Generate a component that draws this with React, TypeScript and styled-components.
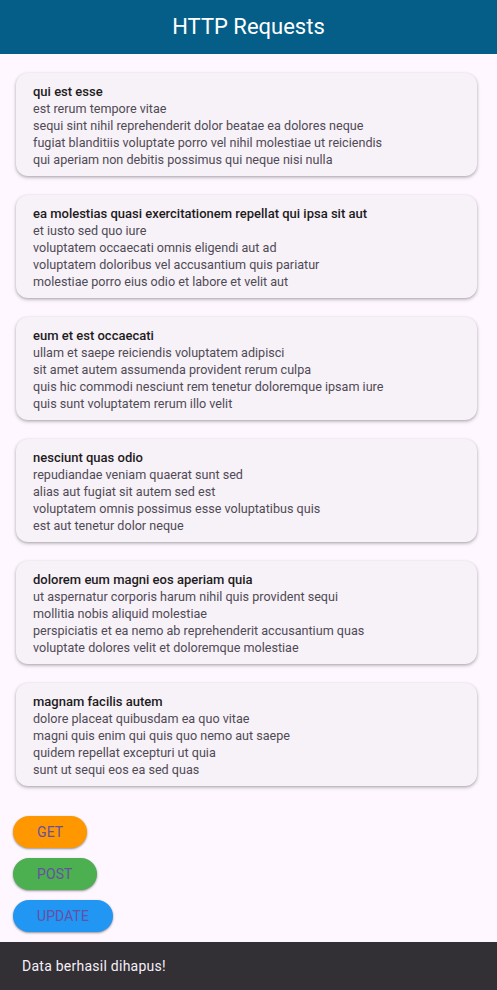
import React from "react";
import styled, { createGlobalStyle } from "styled-components";

const GlobalStyle = createGlobalStyle`
  html, body { margin: 0; padding: 0; }
  body {
    background: #fef7ff;
    font-family: Roboto, "Noto Sans", sans-serif;
    -webkit-font-smoothing: antialiased;
  }
`;

const Page = styled.div`
  min-height: 990px;
  background: #fef7ff;
  display: flex;
  flex-direction: column;
`;

const AppBar = styled.header`
  height: 54px;
  background: #045e87;
  display: flex;
  align-items: center;
  justify-content: center;
  padding-bottom: 2px;
  box-sizing: border-box;
  color: #ffffff;
  font-size: 22px;
  font-weight: 400;
`;

const List = styled.div`
  display: flex;
  flex-direction: column;
  gap: 19px;
  padding: 19px 20px 0 16px;
`;

const Card = styled.div`
  background: #f7f1f8;
  border-radius: 12px;
  padding: 10px 16px 8px 17px;
  box-shadow: 0 1px 3px rgba(0, 0, 0, 0.25), 0 2px 4px rgba(0, 0, 0, 0.12);
`;

const Title = styled.div`
  font-size: 13px;
  line-height: 17px;
  font-weight: 500;
  color: #1d1b20;
`;

const Body = styled.div`
  font-size: 12.6px;
  line-height: 17px;
  color: #4f4b55;
  white-space: pre-line;
`;

const Buttons = styled.div`
  display: flex;
  flex-direction: column;
  align-items: flex-start;
  gap: 10px;
  padding: 30px 0 0 13px;
`;

const ActionButton = styled.button<{ $bg: string }>`
  height: 32px;
  padding: 0 24px;
  border: none;
  border-radius: 16px;
  background: ${(p) => p.$bg};
  color: #6750a4;
  font-family: Roboto, sans-serif;
  font-size: 14px;
  font-weight: 400;
  letter-spacing: 0.1px;
  box-shadow: 0 1px 2px rgba(0, 0, 0, 0.3), 0 1px 3px rgba(0, 0, 0, 0.15);
  cursor: pointer;
`;

const Snackbar = styled.div`
  position: fixed;
  left: 0;
  right: 0;
  bottom: 0;
  height: 48px;
  background: #322f35;
  color: #f5eff7;
  display: flex;
  align-items: center;
  padding-left: 22px;
  font-size: 14px;
  letter-spacing: 0.25px;
`;

const posts = [
  {
    title: "qui est esse",
    body:
      "est rerum tempore vitae\nsequi sint nihil reprehenderit dolor beatae ea dolores neque\nfugiat blanditiis voluptate porro vel nihil molestiae ut reiciendis\nqui aperiam non debitis possimus qui neque nisi nulla",
  },
  {
    title: "ea molestias quasi exercitationem repellat qui ipsa sit aut",
    body:
      "et iusto sed quo iure\nvoluptatem occaecati omnis eligendi aut ad\nvoluptatem doloribus vel accusantium quis pariatur\nmolestiae porro eius odio et labore et velit aut",
  },
  {
    title: "eum et est occaecati",
    body:
      "ullam et saepe reiciendis voluptatem adipisci\nsit amet autem assumenda provident rerum culpa\nquis hic commodi nesciunt rem tenetur doloremque ipsam iure\nquis sunt voluptatem rerum illo velit",
  },
  {
    title: "nesciunt quas odio",
    body:
      "repudiandae veniam quaerat sunt sed\nalias aut fugiat sit autem sed est\nvoluptatem omnis possimus esse voluptatibus quis\nest aut tenetur dolor neque",
  },
  {
    title: "dolorem eum magni eos aperiam quia",
    body:
      "ut aspernatur corporis harum nihil quis provident sequi\nmollitia nobis aliquid molestiae\nperspiciatis et ea nemo ab reprehenderit accusantium quas\nvoluptate dolores velit et doloremque molestiae",
  },
  {
    title: "magnam facilis autem",
    body:
      "dolore placeat quibusdam ea quo vitae\nmagni quis enim qui quis quo nemo aut saepe\nquidem repellat excepturi ut quia\nsunt ut sequi eos ea sed quas",
  },
];

const actions = [
  { label: "GET", bg: "#ff9800" },
  { label: "POST", bg: "#4caf50" },
  { label: "UPDATE", bg: "#2196f3" },
];

export default function App() {
  return (
    <Page>
      <GlobalStyle />
      <AppBar>HTTP Requests</AppBar>
      <List>
        {posts.map((p) => (
          <Card key={p.title}>
            <Title>{p.title}</Title>
            <Body>{p.body}</Body>
          </Card>
        ))}
      </List>
      <Buttons>
        {actions.map((a) => (
          <ActionButton key={a.label} $bg={a.bg}>
            {a.label}
          </ActionButton>
        ))}
      </Buttons>
      <Snackbar>Data berhasil dihapus!</Snackbar>
    </Page>
  );
}
